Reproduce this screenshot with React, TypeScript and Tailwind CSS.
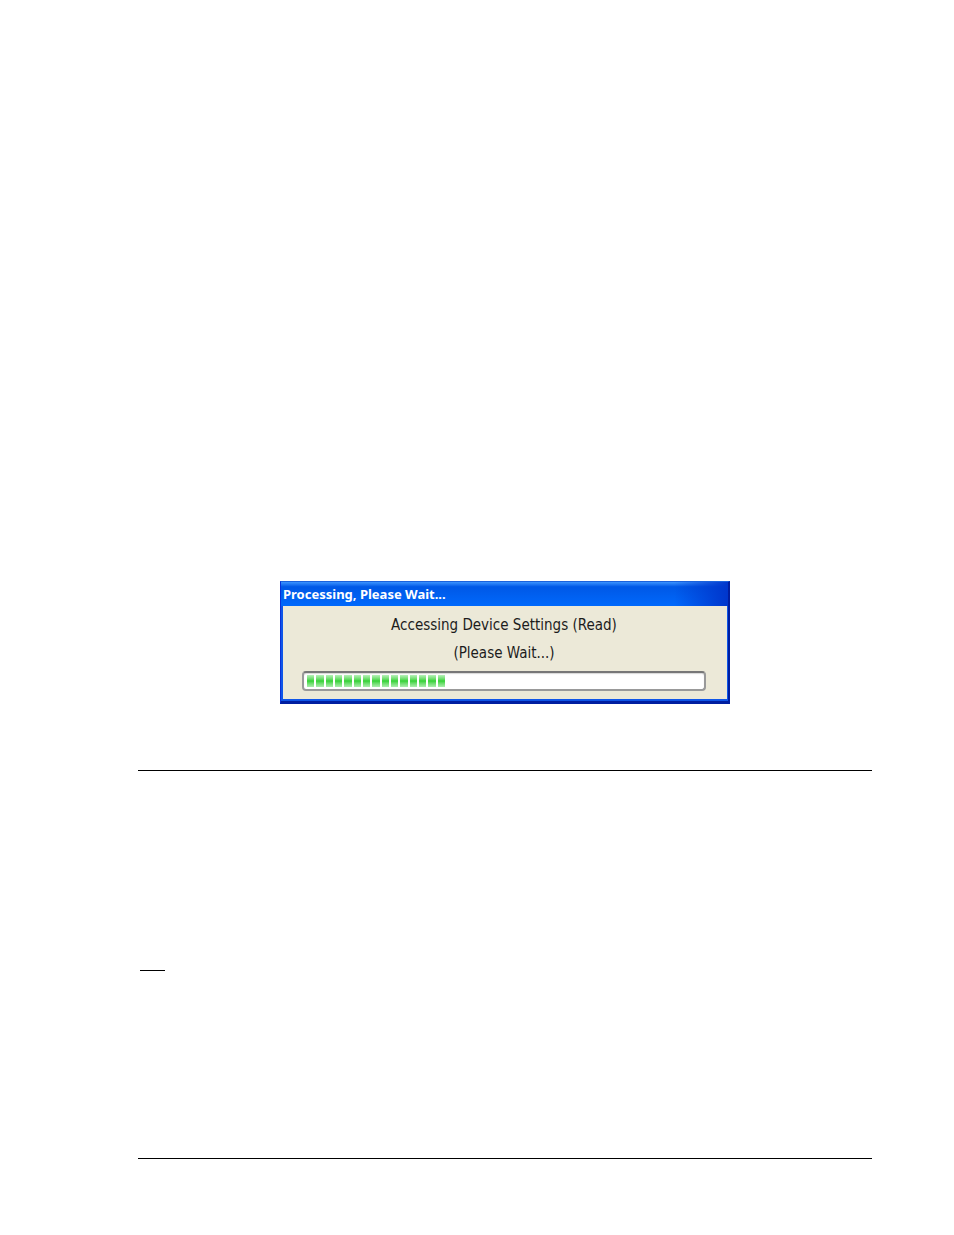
import React from 'react';

const BLOCKS = 15;

function ProgressBar() {
  return (
    <div
      role="progressbar"
      aria-labelledby="status"
      aria-valuemin={0}
      aria-valuemax={100}
      aria-valuenow={35}
      className="h-5 rounded-[4px] border-2 border-[#999] border-t-[#777] bg-white py-[2px] pl-[3px] pr-[2px] shadow-[inset_0_1px_1px_#d8d8d8]"
    >
      <div className="flex h-full w-[35%] gap-[2px]">
        {Array.from({ length: BLOCKS }, (_, i) => (
          <span
            key={i}
            className="flex-1 bg-linear-to-b from-[#b5f0b8] via-[#2fd232] to-[#a9eeac]"
          />
        ))}
      </div>
    </div>
  );
}

function ProcessingDialog() {
  return (
    <section
      aria-labelledby="dialog-title"
      className="mx-auto w-full max-w-[450px] border border-t-[#1b62dc] border-r-2 border-b-3 border-[#0831d9] border-r-[#001ea0] border-b-[#001ea0]"
    >
      <header className="bg-linear-to-b from-[#3a93ff] from-0% via-[#0058e6] via-20% to-[#0069fc]">
        <div className="bg-linear-to-r from-transparent from-88% to-[#0036cc] px-[2px]">
          <h1
            id="dialog-title"
            className="h-6 font-['Noto_Sans',sans-serif] text-[13px] leading-6 font-bold text-white"
          >
            Processing, Please Wait...
          </h1>
        </div>
      </header>
      <div className="border-b-2 border-l-2 border-r border-[#0f56e8] bg-[#ece9d8] pt-[9px] pr-[21px] pb-2 pl-[19px] font-['DejaVu_Sans_Condensed','DejaVu_Sans',sans-serif] text-[15px] leading-5 text-[#1c1c1c]">
        <p id="status" className="text-center">Accessing Device Settings (Read)</p>
        <p className="my-2 text-center">(Please Wait...)</p>
        <ProgressBar />
      </div>
    </section>
  );
}

export default function App() {
  return (
    <main className="min-h-screen bg-white pt-[581px] pr-[82px] pb-[76px] pl-[138px]">
      <ProcessingDialog />
      <hr className="mt-[66px] border-t border-black" />
      <hr className="mt-[199px] ml-[2px] w-[25px] border-t border-black" />
      <hr className="mt-[187px] border-t border-black" />
    </main>
  );
}
